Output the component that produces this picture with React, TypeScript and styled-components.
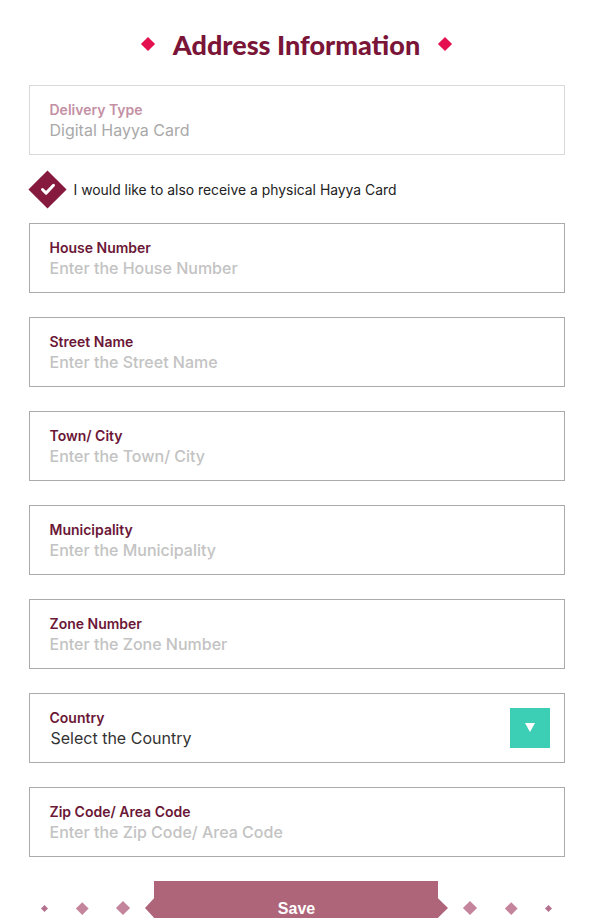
import { createGlobalStyle, styled } from 'styled-components'

const GlobalStyle = createGlobalStyle`
  body {
    margin: 0;
    background: #fff;
    font-family: Inter, 'Liberation Sans', sans-serif;
  }
`

const fields = [
  { label: 'House Number', placeholder: 'Enter the House Number' },
  { label: 'Street Name', placeholder: 'Enter the Street Name' },
  { label: 'Town/ City', placeholder: 'Enter the Town/ City' },
  { label: 'Municipality', placeholder: 'Enter the Municipality' },
  { label: 'Zone Number', placeholder: 'Enter the Zone Number' },
]

export default function App() {
  return (
    <>
      <GlobalStyle />
      <Page>
        <Header>
          <Diamond size={10} color="#e4104f" />
          <Title>Address Information</Title>
          <Diamond size={10} color="#e4104f" />
        </Header>

        <Field muted>
          <Label muted>Delivery Type</Label>
          <Value muted>Digital Hayya Card</Value>
        </Field>

        <CheckRow>
          <CheckBox>
            <svg width="20" height="20" viewBox="0 0 20 20">
              <path d="M4.5 10.5l3.6 3.6L15.5 6.3" fill="none" stroke="#fff" strokeWidth="3" strokeLinecap="round" strokeLinejoin="round" />
            </svg>
          </CheckBox>
          <CheckText>I would like to also receive a physical Hayya Card</CheckText>
        </CheckRow>

        <Fields>
          {fields.map((f) => (
            <Field key={f.label}>
              <Label>{f.label}</Label>
              <Value>{f.placeholder}</Value>
            </Field>
          ))}
          <Field>
            <SelectRow>
              <div>
                <Label>Country</Label>
                <Value selected>Select the Country</Value>
              </div>
              <SelectButton>
                <svg width="10" height="9" viewBox="0 0 10 9">
                  <path d="M0 0h10L5 9z" fill="#fff" />
                </svg>
              </SelectButton>
            </SelectRow>
          </Field>
          <Field>
            <Label>Zip Code/ Area Code</Label>
            <Value>Enter the Zip Code/ Area Code</Value>
          </Field>
        </Fields>

        <Footer>
          <DiamondGroup>
            <Diamond size={5} color="#b3728e" />
            <Diamond size={8.5} color="#c4849c" />
            <Diamond size={10} color="#c4849c" />
          </DiamondGroup>
          <SaveButton>Save</SaveButton>
          <DiamondGroup>
            <Diamond size={10} color="#c4849c" />
            <Diamond size={8.5} color="#c4849c" />
            <Diamond size={5} color="#b3728e" />
          </DiamondGroup>
        </Footer>
      </Page>
    </>
  )
}

const Page = styled.div`
  width: 536px;
  margin: 0 auto;
`

const Header = styled.header`
  display: flex;
  align-items: center;
  justify-content: center;
  gap: 18px;
  height: 40px;
  padding: 24px 0 21px;
`

const Title = styled.h1`
  margin: 0;
  font-family: Lato, 'Open Sans', sans-serif;
  font-weight: 900;
  font-size: 27px;
  color: #7a1538;
`

const Diamond = styled.span<{ size: number; color: string }>`
  display: block;
  width: ${({ size }) => size}px;
  height: ${({ size }) => size}px;
  margin: ${({ size }) => size * 0.21}px;
  background: ${({ color }) => color};
  transform: rotate(45deg);
`

const Field = styled.div<{ muted?: boolean }>`
  box-sizing: border-box;
  height: 70px;
  padding: 15px 20px 0;
  border: 1px solid ${({ muted }) => (muted ? '#d9d9d9' : '#ababab')};
`

const Label = styled.div<{ muted?: boolean }>`
  font-size: 14px;
  line-height: 18px;
  font-weight: 600;
  color: ${({ muted }) => (muted ? '#c490a4' : '#6b1737')};
`

const Value = styled.div<{ muted?: boolean; selected?: boolean }>`
  margin-top: 1px;
  font-size: 16px;
  line-height: 20px;
  font-weight: ${({ muted, selected }) => (muted || selected ? 400 : 500)};
  color: ${({ muted, selected }) => (selected ? '#333' : muted ? '#a9a9a9' : '#c3c3c3')};
  padding-left: ${({ selected }) => (selected ? '1px' : 0)};
`

const CheckRow = styled.label`
  display: flex;
  align-items: center;
  gap: 7px;
  height: 38px;
  margin: 15px 0;
`

const CheckBox = styled.span`
  display: flex;
  align-items: center;
  justify-content: center;
  width: 38px;
  height: 38px;
  position: relative;

  &::before {
    content: '';
    position: absolute;
    inset: 5.5px;
    background: #861a3e;
    transform: rotate(45deg);
  }

  svg {
    position: relative;
  }
`

const CheckText = styled.span`
  margin-top: 2px;
  font-size: 13.9px;
  color: #222;
`

const Fields = styled.div`
  display: flex;
  flex-direction: column;
  gap: 24px;
`

const SelectRow = styled.div`
  display: flex;
  align-items: center;
  justify-content: space-between;
  margin-right: -6px;
`

const SelectButton = styled.span`
  display: flex;
  align-items: center;
  justify-content: center;
  width: 40px;
  height: 40px;
  margin-top: -2px;
  background: #3ccfb6;
`

const Footer = styled.div`
  display: flex;
  align-items: center;
  justify-content: center;
  gap: 15px;
  margin-top: 24px;
  height: 54px;
`

const DiamondGroup = styled.div`
  display: flex;
  align-items: center;
  gap: 28px;
`

const SaveButton = styled.button`
  width: 303px;
  height: 54px;
  border: none;
  padding: 2px 0 0;
  background: #ae6479;
  color: #fff;
  font-family: 'Liberation Sans', Arial, sans-serif;
  font-weight: 700;
  font-size: 16px;
  clip-path: polygon(9px 0, calc(100% - 10px) 0, calc(100% - 10px) 32%, 100% 50%, calc(100% - 10px) 68%, calc(100% - 10px) 100%, 9px 100%, 9px 68%, 0 50%, 9px 32%);
`
